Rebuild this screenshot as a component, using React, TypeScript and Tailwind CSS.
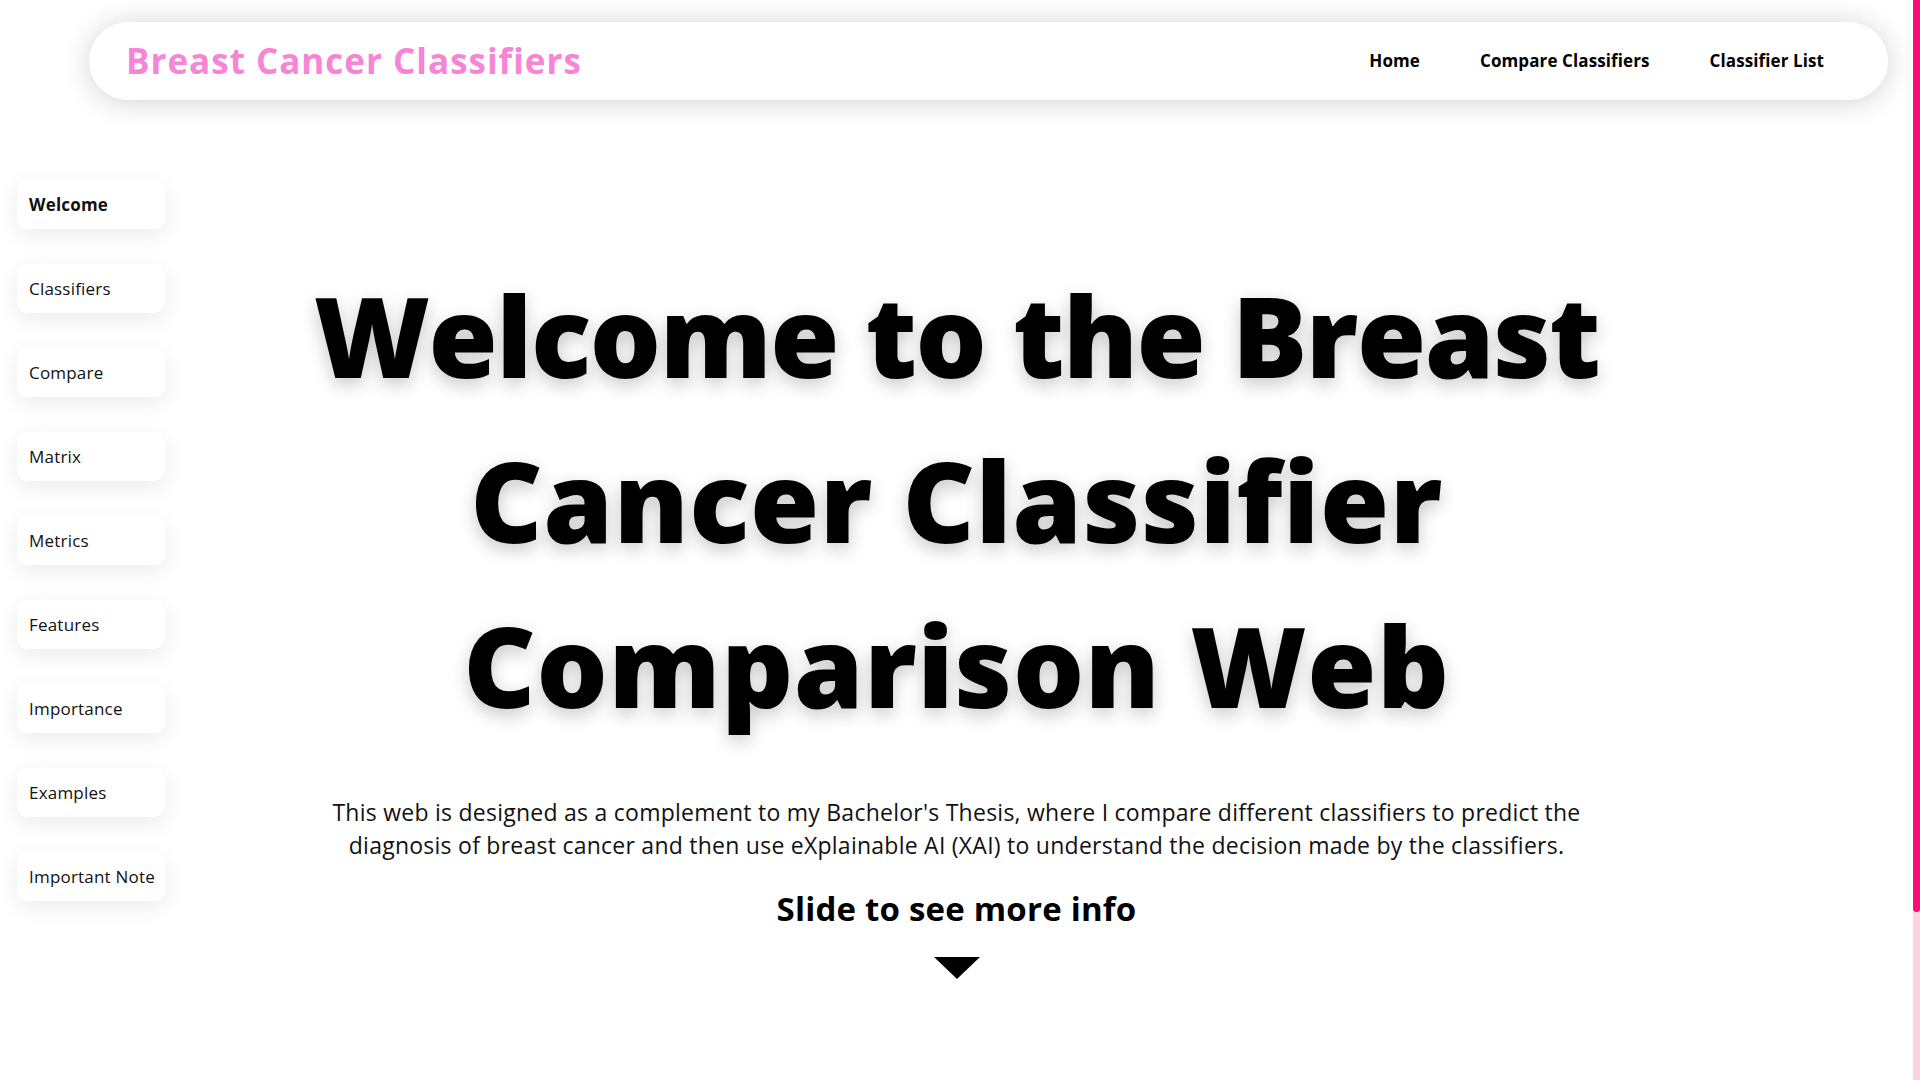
const sections = [
  "Welcome",
  "Classifiers",
  "Compare",
  "Matrix",
  "Metrics",
  "Features",
  "Importance",
  "Examples",
  "Important Note",
];

const links = ["Home", "Compare Classifiers", "Classifier List"];

export default function App() {
  return (
    <div className="min-h-[1080px] bg-white text-black font-['Open_Sans',sans-serif] pr-[7px]">
      {/* page scrollbar (styled) */}
      <div className="fixed right-0 top-0 w-[7px] h-screen bg-[#fdd3e3]">
        <div className="w-full h-[912px] rounded-b-full bg-[#ff0a78]" />
      </div>

      <div className="pt-[22px]">
        {/* top navbar */}
        <header className="ml-[89px] mr-[25px] h-[78px] rounded-full bg-white shadow-[0_2px_28px_rgba(0,0,0,0.18)] flex items-center justify-between pl-[37px] pr-[34px]">
          <h1 className="text-[35px] font-bold tracking-[1px] text-[#f784d5]">Breast Cancer Classifiers</h1>
          <nav className="flex">
            {links.map((l) => (
              <a key={l} className="px-[30px] text-[17px] tracking-[0.1px] font-bold">
                {l}
              </a>
            ))}
          </nav>
        </header>

        <div className="grid grid-cols-[182px_1fr_182px]">
          {/* side menu */}
          <aside className="pl-[17px] pt-[80px] flex flex-col gap-[35px]">
            {sections.map((s, i) => (
              <div
                key={s}
                className={
                  "w-[148px] h-[49px] flex items-center pl-[12px] rounded-[10px] bg-white text-[17px] tracking-[0.2px] text-[#111] shadow-[0_6px_22px_rgba(0,0,0,0.08)] " +
                  (i === 0 ? "font-bold" : "font-normal")
                }
              >
                {s}
              </div>
            ))}
          </aside>

          {/* welcome */}
          <main className="pt-[152px] flex flex-col items-center text-center">
            <h2 className="text-[112px] leading-[165px] font-extrabold whitespace-nowrap [text-shadow:0_6px_18px_rgba(0,0,0,0.22)]">
              <span className="block tracking-[-1.5px]">Welcome to the Breast</span>
              <span className="block tracking-[0.5px]">Cancer Classifier</span>
              <span className="block tracking-[0.6px]">Comparison Web</span>
            </h2>
            <p className="mt-[49px] text-[23px] leading-[33px] tracking-[0.25px] text-[#111] whitespace-nowrap">
              This web is designed as a complement to my Bachelor's Thesis, where I compare different classifiers to predict the
              <br />
              diagnosis of breast cancer and then use eXplainable AI (XAI) to understand the decision made by the classifiers.
            </p>
            <p className="mt-[23px] text-[33px] leading-[48px] tracking-[0.2px] font-bold">Slide to see more info</p>
            <div className="mt-[24px] w-0 h-0 border-l-[23px] border-r-[23px] border-t-[22px] border-l-transparent border-r-transparent border-t-black" />
          </main>
          <div />
        </div>
      </div>
    </div>
  );
}
